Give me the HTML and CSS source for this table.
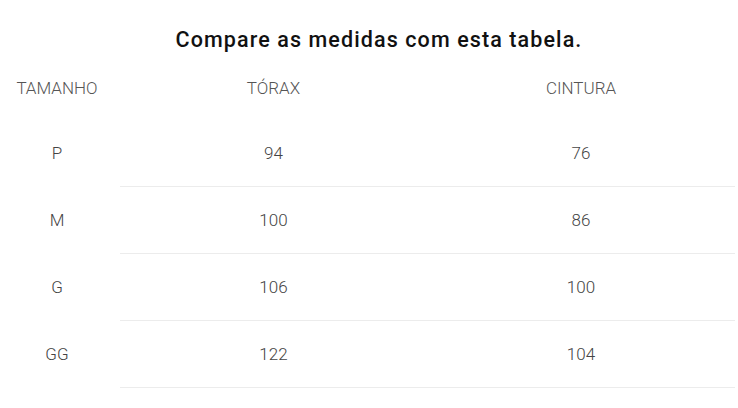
FILE: index.html
```html
<!DOCTYPE html>
<html lang="pt">
<head>
<meta charset="utf-8">
<link rel="stylesheet" href="styles.css">
</head>
<body>
<div class="page">
  <h2 class="title">Compare as medidas com esta tabela.</h2>
  <div class="table">
    <div class="row head">
      <div class="cell size">TAMANHO</div>
      <div class="cell">TÓRAX</div>
      <div class="cell">CINTURA</div>
    </div>
    <div class="row">
      <div class="cell size">P</div>
      <div class="cell line">94</div>
      <div class="cell line">76</div>
    </div>
    <div class="row">
      <div class="cell size">M</div>
      <div class="cell line">100</div>
      <div class="cell line">86</div>
    </div>
    <div class="row">
      <div class="cell size">G</div>
      <div class="cell line">106</div>
      <div class="cell line">100</div>
    </div>
    <div class="row">
      <div class="cell size">GG</div>
      <div class="cell line">122</div>
      <div class="cell line">104</div>
    </div>
  </div>
</div>
</body>
</html>
```
FILE: styles.css
```css
html, body {
  margin: 0;
  padding: 0;
  background: #fff;
}
.page {
  width: 735px;
  font-family: Roboto, "Liberation Sans", sans-serif;
}
.title {
  margin: 0;
  padding: 25px 0 0 23px;
  height: 45px;
  font-size: 21.5px;
  font-weight: 500;
  letter-spacing: 1.1px;
  color: #111;
  text-align: center;
  line-height: 30px;
}
.row {
  display: grid;
  grid-template-columns: 114px 6px 307px 308px;
}
.cell {
  display: flex;
  align-items: center;
  justify-content: center;
  height: 66px;
  font-size: 17px;
  font-weight: 300;
  color: #444;
}
.row .cell:nth-child(2) { grid-column: 3; }
.row .cell:nth-child(3) { grid-column: 4; }
.cell.line {
  border-bottom: 1px solid #ececec;
}
.head .cell {
  height: 36px;
  padding-bottom: 14px;
  font-size: 17px;
  color: #555;
}
```
